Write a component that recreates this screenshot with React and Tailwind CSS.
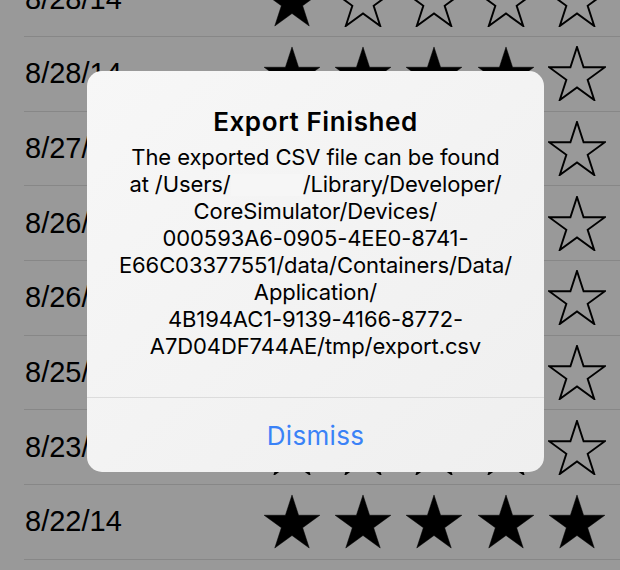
import React from 'react';

const rows = [
  { date: '8/28/14', rating: 1 },
  { date: '8/28/14', rating: 4 },
  { date: '8/27/14', rating: 3 },
  { date: '8/26/14', rating: 4 },
  { date: '8/26/14', rating: 2 },
  { date: '8/25/14', rating: 3 },
  { date: '8/23/14', rating: 0 },
  { date: '8/22/14', rating: 5 },
];

const STAR_POINTS =
  '29,0 35.85,21.07 58,21.08 40.08,34.1 46.93,55.18 29,42.15 11.07,55.18 17.92,34.1 0,21.08 22.15,21.07';

const Star = ({ filled }) => (
  <svg width="58" height="55" viewBox="-1 -1 60 57.2" className="block">
    <polygon
      points={STAR_POINTS}
      fill={filled ? '#000' : 'none'}
      stroke="#000"
      strokeWidth={filled ? 0.5 : 2}
      strokeLinejoin="miter"
    />
  </svg>
);

const messageLines = [
  'The exported CSV file can be found',
  null,
  'CoreSimulator/Devices/',
  '000593A6-0905-4EE0-8741-',
  'E66C03377551/data/Containers/Data/',
  'Application/',
  '4B194AC1-9139-4166-8772-',
  'A7D04DF744AE/tmp/export.csv',
];

const App = () => {
  return (
    <div className="relative h-[570px] w-[620px] overflow-hidden bg-[#999999]">
      {/* Ratings list (dimmed) */}
      <div className="mt-[-37.67px]">
        {rows.map((row, idx) => (
          <div
            key={idx}
            className="ml-6 flex h-[74.67px] items-center justify-between border-b border-[#878787] pr-[14px] pl-px"
          >
            <span className="text-[29px] leading-none text-black [font-family:'Liberation_Sans',Arial,sans-serif]">
              {row.date}
            </span>
            <div className="flex gap-[13.3px]">
              {[0, 1, 2, 3, 4].map((i) => (
                <Star key={i} filled={i < row.rating} />
              ))}
            </div>
          </div>
        ))}
      </div>

      {/* Alert */}
      <div className="absolute top-[71px] left-[87px] flex h-[401px] w-[457px] flex-col overflow-hidden rounded-[15px] bg-gradient-to-br from-[#f7f7f7] to-[#efefef] text-center text-black [font-family:Inter,'Noto_Sans',sans-serif]">
        <div className="flex h-[326px] flex-col pt-[36px]">
          <h2 className="text-[26px] leading-[30px] font-semibold tracking-[0.6px]">
            Export Finished
          </h2>
          <div className="mt-[7px] text-[22px] leading-[27px] tracking-[-0.1px]">
            {messageLines.map((line, idx) =>
              line === null ? (
                <p key={idx}>
                  at /Users/
                  <span className="inline-block h-[22px] w-[72px] align-[-4px] bg-[#f6f6f6]" />
                  /Library/Developer/
                </p>
              ) : (
                <p key={idx}>{line}</p>
              )
            )}
          </div>
        </div>
        <div className="h-px bg-[#dcdcdc]" />
        <button className="flex flex-1 items-center justify-center text-[26px] tracking-[0.3px] text-[#3a82f7]">
          Dismiss
        </button>
      </div>
    </div>
  );
};

export default App;
